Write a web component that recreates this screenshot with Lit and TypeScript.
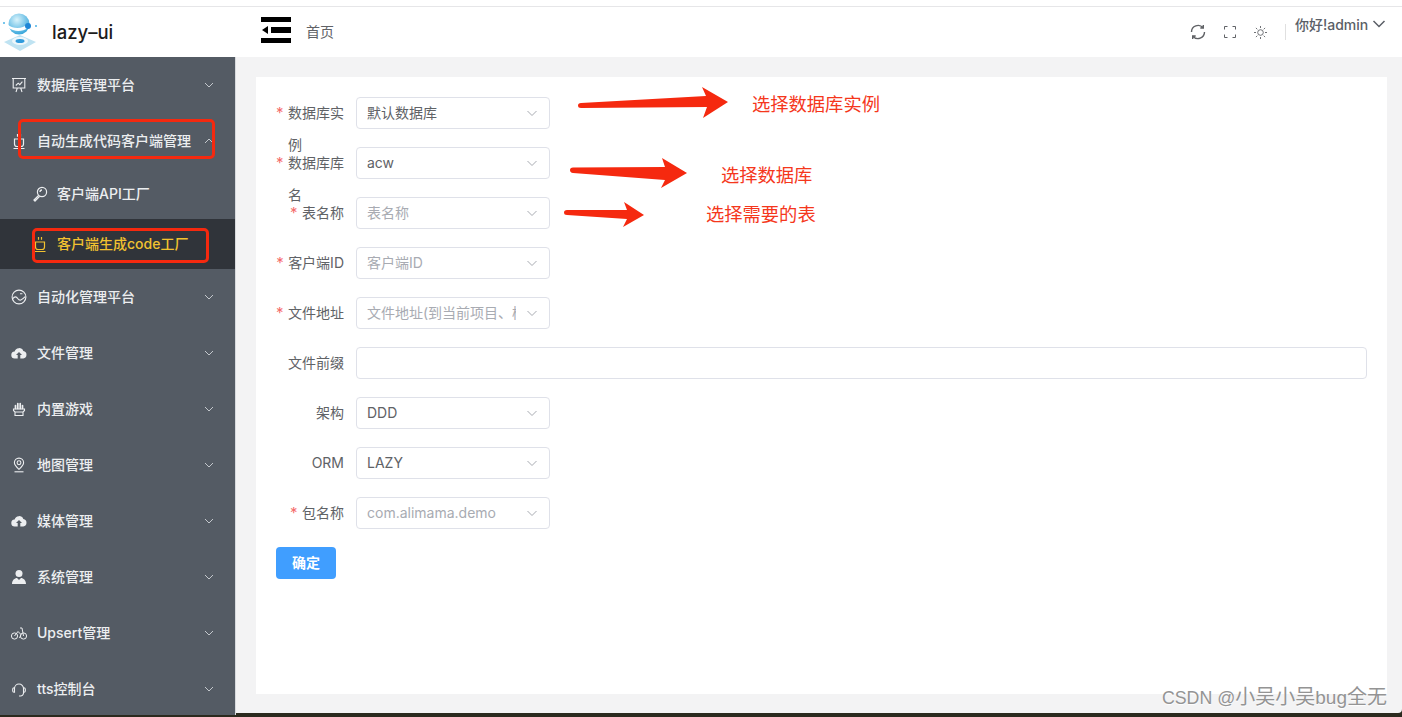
import { LitElement, html, css, svg } from "lit";
import { customElement } from "lit/decorators.js";

const icons: Record<string, any> = {
  board: svg`<path d="M1 1.500h14M2.200 1.500v9.500h11.600V1.500M5 15l1.300-4M11 15L9.700 11M4.800 8.500L7.200 6.200l1.600 1.500 2.600-3" fill="none" stroke="currentColor" stroke-width="1.100"/>`,
  cup: svg`<path d="M6.500 1v2.800M9.500 1v2.800M3.500 6h9v5a2.500 2.500 0 0 1-2.500 2.500H6A2.500 2.500 0 0 1 3.500 11zM2.500 15.500h11" fill="none" stroke="currentColor" stroke-width="1.200"/>`,
  search: svg`<circle cx="10" cy="6" r="4.600" fill="none" stroke="currentColor" stroke-width="1.200"/><path d="M8 6a2 2 0 0 1 2-2M6.600 9.400L2 14l1 1 4.600-4.600" fill="none" stroke="currentColor" stroke-width="1.300"/>`,
  smile: svg`<circle cx="8" cy="8" r="6.900" fill="none" stroke="currentColor" stroke-width="1.100"/><path d="M1.500 10c2.200-2.800 3.800-2.800 5.400-.3s3.800 1.600 7.300-2M9 4.800h2.400" fill="none" stroke="currentColor" stroke-width="1.100"/>`,
  cloud: svg`<path d="M4 13.500a3.500 3.500 0 0 1-.4-7A4.600 4.600 0 0 1 12.300 6a3.800 3.800 0 0 1 0 7.500H9.300V10h1.700L8 7 5 10h1.700v3.500z" fill="currentColor"/>`,
  fist: svg`<path d="M4.500 7.500V4.500M6.800 7.500V2.500M9.200 7.500V2.500M11.500 7.500V4.500" fill="none" stroke="currentColor" stroke-width="1.700" stroke-linecap="round"/><path d="M2.500 8h11v1.500L12 11v3.500H4V11L2.500 9.500zM4 11h8" fill="none" stroke="currentColor" stroke-width="1.100"/>`,
  pin: svg`<path d="M8 12.300C5.300 9.800 3.400 7.900 3.400 5.700a4.600 4.600 0 0 1 9.200 0c0 2.200-1.900 4.100-4.600 6.600z" fill="none" stroke="currentColor" stroke-width="1.100"/><circle cx="8" cy="5.700" r="1.900" fill="none" stroke="currentColor" stroke-width="1.100"/><path d="M3.500 14.800h9" stroke="currentColor" stroke-width="1.100"/>`,
  user: svg`<circle cx="8" cy="4.500" r="3.500" fill="currentColor"/><path d="M1 15c0-3.800 2.700-6 5-6l2 2 2-2c2.300 0 5 2.200 5 6z" fill="currentColor"/>`,
  bike: svg`<circle cx="3.500" cy="11" r="3.100" fill="none" stroke="currentColor" stroke-width="1"/><circle cx="12.500" cy="11" r="3.100" fill="none" stroke="currentColor" stroke-width="1"/><path d="M3.500 11L7 6.500l3 3-1.500 3.500M9 3h2l1.500 8" fill="none" stroke="currentColor" stroke-width="1"/>`,
  headset: svg`<path d="M3.500 7.500a4.500 4.500 0 0 1 9 0v4.500a3 3 0 0 1-3 3H8M3.500 6.800H3A1.300 1.300 0 0 0 1.700 8v2A1.300 1.300 0 0 0 3 11.200h.5zM12.500 6.800h.5A1.300 1.300 0 0 1 14.300 8v2a1.300 1.300 0 0 1-1.300 1.200h-.5z" fill="none" stroke="currentColor" stroke-width="1.100"/>`,
};

const chevron = (up = false) => html`<svg class="chev" viewBox="0 0 12 12"><path d=${up ? "M2 8l4-4 4 4" : "M2 4l4 4 4-4"}></path></svg>`;

const icon = (n: string) => html`<svg class="ic" viewBox="0 0 16 16">${icons[n]}</svg>`;

const after = [
  ["smile", "自动化管理平台"],
  ["cloud", "文件管理"],
  ["fist", "内置游戏"],
  ["pin", "地图管理"],
  ["cloud", "媒体管理"],
  ["user", "系统管理"],
  ["bike", "Upsert管理"],
  ["headset", "tts控制台"],
];

interface Field { label: string; req?: boolean; value?: string; placeholder?: string; wide?: boolean }
const fields: Field[] = [
  { label: "数据库实例", req: true, value: "默认数据库" },
  { label: "数据库库名", req: true, value: "acw" },
  { label: "表名称", req: true, placeholder: "表名称" },
  { label: "客户端ID", req: true, placeholder: "客户端ID" },
  { label: "文件地址", req: true, placeholder: "文件地址(到当前项目、模块)" },
  { label: "文件前缀", wide: true },
  { label: "架构", value: "DDD" },
  { label: "ORM", value: "LAZY" },
  { label: "包名称", req: true, placeholder: "com.alimama.demo" },
];

@customElement("app-root")
export class AppRoot extends LitElement {
  static styles = css`
    :host {
      display: block;
      width: 1402px;
      height: 717px;
      overflow: hidden;
      position: relative;
      background: #2b2a1e;
      font-family: Inter, "Noto Sans CJK SC", sans-serif;
      font-size: 14px;
    }
    .top { height: 6px; background: #fff; border-bottom: 1px solid #e6e6e8; }
    .header { height: 50px; background: #fff; display: flex; align-items: center; }
    .logo { width: 52px; display: flex; }
    .logo svg { width: 40px; height: 50px; }
    .brand { width: 209px; font-size: 18.5px; font-weight: 500; color: #1c1c1c; }
    .fold { width: 30px; height: 26px; margin: -4px 15px 0 0; }
    .crumb { flex: 1; color: #606266; padding-bottom: 2px; }
    .tools { display: flex; align-items: center; color: #606266; }
    .tools svg { display: block; fill: none; stroke: currentColor; }
    .t1 { width: 16px; height: 16px; margin-right: 18px; stroke-width: 1.4; }
    .t2 { width: 12px; height: 12px; margin-right: 18px; }
    .t3 { width: 13px; height: 13px; margin-right: 18px; }
    .sep { width: 1px; height: 16px; background: #e0e0e0; margin-right: 9px; }
    .user { display: flex; align-items: center; gap: 4px; width: 107px; color: #5a5e66; font-weight: 500; margin-top: -17px; white-space: nowrap; }
    .user svg { width: 14px; height: 14px; fill: none; stroke: #5a5e66; stroke-width: 1.5; }
    .body { display: flex; height: 658px; }
    .side { width: 235px; height: 658px; background: #545b64; border-right: 1px solid #d8dadd; flex: none; color: #eceef0; font-weight: 500; }
    .item { height: 56px; display: flex; align-items: center; padding: 0 21px 0 11px; }
    .sub { height: 50px; display: flex; align-items: center; padding-left: 32px; }
    .sub .ic { margin-right: 9px; }
    .sub.on { background: #30343a; color: #f2c230; }
    .ic { width: 16px; height: 16px; margin-right: 10px; flex: none; }
    .label { flex: 1; padding-bottom: 2px; }
    .chev { width: 12px; height: 12px; fill: none; stroke: #c3c7cc; stroke-width: 1; margin-right: -1px; }
    .main { flex: 1; height: 656px; background: #f3f3f4; padding: 20px 15px 19px 20px; box-sizing: border-box; border-bottom-right-radius: 4px; }
    .card { height: 617px; background: #fff; padding: 20px; box-sizing: border-box; }
    .row { display: flex; height: 32px; margin-bottom: 18px; }
    .lab { width: 80px; flex: none; height: 32px; padding-right: 12px; box-sizing: border-box; display: flex; justify-content: flex-end; line-height: 32px; color: #606266; }
    .star { color: #f56c6c; width: 8px; margin-right: 4px; flex: none; font-size: 15px; }
    .sel { width: 194px; height: 32px; box-sizing: border-box; border: 1px solid #dfe1e9; border-radius: 4px; display: flex; align-items: center; padding-left: 10px; color: #606266; }
    .sel.wide { width: 1011px; }
    .sel span { flex: 1; overflow: hidden; white-space: nowrap; padding-bottom: 2px; }
    .sel.ph { color: #a8abb2; }
    .sel svg { width: 12px; height: 12px; fill: none; stroke: #a8abb2; stroke-width: 1; margin: 0 11px 0 10px; flex: none; }
    .btn { width: 60px; height: 32px; background: #409eff; color: #fff; border: none; border-radius: 4px; font: 700 14px "Noto Sans CJK SC", sans-serif; padding: 0 0 2px; }
    .box { position: absolute; border: 3px solid #f5290f; border-radius: 5px; box-sizing: border-box; }
    .b1 { left: 18px; top: 119px; width: 197px; height: 40px; }
    .b2 { left: 32px; top: 228px; width: 177px; height: 35px; }
    .note { position: absolute; color: #f5371c; font-size: 18.3px; line-height: 24px; font-family: "Noto Sans CJK SC", sans-serif; white-space: nowrap; }
    .n1 { left: 752px; top: 91px; }
    .n2 { left: 721px; top: 162px; }
    .n3 { left: 706px; top: 201px; }
    .arrows { position: absolute; left: 560px; top: 80px; width: 180px; height: 155px; }
    .mark { position: absolute; right: 15px; top: 684px; font-size: 20px; line-height: 26px; color: #949494; text-shadow: 0 1px 1px #fff; font-family: "Liberation Sans", "Noto Sans CJK SC", sans-serif; white-space: nowrap; }
    .mark .sm { font-size: 17.8px; }
    .mark .md { font-size: 19px; }
  `;

  private field(f: Field) {
    const cls = "sel" + (f.wide ? " wide" : "") + (f.placeholder ? " ph" : "");
    return html`<div class="row">
      <div class="lab">${f.req ? html`<span class="star">*</span>` : ""}<div>${f.label}</div></div>
      <div class=${cls}>
        <span>${f.value ?? f.placeholder ?? ""}</span>
        ${f.wide ? "" : html`<svg viewBox="0 0 12 12"><path d="M1.500 4l4.500 4.500L10.500 4"></path></svg>`}
      </div>
    </div>`;
  }

  render() {
    return html`
      <div class="top"></div>
      <div class="header">
        <div class="logo">
          <svg viewBox="0 7 40 50">
            <defs>
              <radialGradient id="g" cx="40%" cy="30%" r="70%"><stop offset="0" stop-color="#d9f3fb"></stop><stop offset="1" stop-color="#3aa8dc"></stop></radialGradient>
            </defs>
            <path d="M4 42l16-7 16 7-16 9z" fill="#bfe3f2"></path>
            <ellipse cx="20" cy="41" rx="8" ry="4" fill="#eef7fb"></ellipse>
            <ellipse cx="20" cy="41" rx="4.500" ry="2" fill="#2f9bdc"></ellipse>
            <circle cx="19" cy="24" r="10.500" fill="url(#g)"></circle>
            <path d="M8 25c6 4 14 4 20-1v4c-6 4-14 4-20-.5z" fill="#fff"></path>
            <circle cx="28" cy="26" r="3" fill="#1f86d6"></circle>
            <circle cx="4" cy="23" r="1" fill="#4bb3e6"></circle>
            <circle cx="36" cy="26" r="1" fill="#4bb3e6"></circle>
          </svg>
        </div>
        <div class="brand">lazy–ui</div>
        <svg class="fold" viewBox="0 0 30 26">
          <path d="M0 0h30v5H0zM10 10h20v6H10zM0 21h30v5H0zM7 9v8l-6-4z" fill="#000"></path>
        </svg>
        <div class="crumb">首页</div>
        <div class="tools">
          <svg class="t1" viewBox="0 0 16 16"><path d="M14.500 8a6.500 6.500 0 0 1-11.500 4.200M1.500 8A6.500 6.500 0 0 1 13 3.800M13.300 1v3h-3M2.700 15v-3h3"></path></svg>
          <svg class="t2" viewBox="0 0 12 12"><path d="M.5 3.500v-3h3M8.500.5h3v3M11.500 8.500v3h-3M3.500 11.500h-3v-3"></path></svg>
          <svg class="t3" viewBox="0 0 13 13" stroke-width=".9"><circle cx="6.500" cy="6.500" r="2.800"></circle><path d="M6.500 0v2M6.500 11v2M0 6.500h2M11 6.500h2M1.900 1.900l1.400 1.400M9.700 9.700l1.400 1.400M1.900 11.100l1.400-1.400M9.700 3.300l1.400-1.400"></path></svg>
          <div class="sep"></div>
          <div class="user">你好!admin<svg viewBox="0 0 14 14"><path d="M1.500 4l5.500 5.500L12.500 4"></path></svg></div>
        </div>
      </div>
      <div class="body">
        <nav class="side">
          <div class="item">${icon("board")}<span class="label">数据库管理平台</span>${chevron()}</div>
          <div class="item">${icon("cup")}<span class="label">自动生成代码客户端管理</span>${chevron(true)}</div>
          <div class="sub">${icon("search")}<span class="label">客户端API工厂</span></div>
          <div class="sub on">${icon("cup")}<span class="label">客户端生成code工厂</span></div>
          ${after.map(([i, t]) => html`<div class="item">${icon(i)}<span class="label">${t}</span>${chevron()}</div>`)}
        </nav>
        <main class="main">
          <div class="card">
            ${fields.map((f) => this.field(f))}
            <button class="btn">确定</button>
          </div>
        </main>
      </div>
      <div class="box b1"></div>
      <div class="box b2"></div>
      <svg class="arrows" viewBox="560 80 180 155">
        <g fill="#f5290f">
          <path d="M578 105.500Q578 103 581 103L706 96L702 87L728 102L703 118L707 107L581 108Q578 108 578 105.500Z"></path>
          <path d="M570 170Q570 167.500 573 167.500L665 167L662 158L687 173L661 188L665 180L573 173Q570 172.500 570 170Z"></path>
          <path d="M564 212.500Q564 210 567 210L627 210L624 202L644 215L623 227L627 219L567 215Q564 215 564 212.500Z"></path>
        </g>
      </svg>
      <div class="note n1">选择数据库实例</div>
      <div class="note n2">选择数据库</div>
      <div class="note n3">选择需要的表</div>
      <div class="mark"><span class="sm">CSDN @</span>小吴小吴<span class="md">bug</span>全无</div>
    `;
  }
}
